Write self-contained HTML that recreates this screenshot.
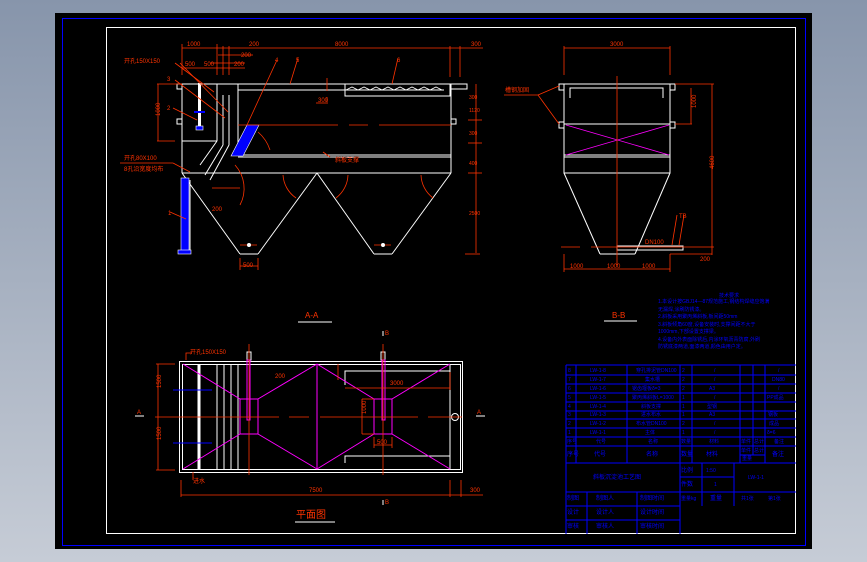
<!DOCTYPE html>
<html><head><meta charset="utf-8"><style>
html,body{margin:0;padding:0;width:867px;height:562px;overflow:hidden;background:linear-gradient(#8795ab,#c6ccd6);}
svg{display:block}
text{font-family:"Liberation Sans","Noto Sans CJK SC",sans-serif;}
</style></head><body>
<svg width="867" height="562" viewBox="0 0 867 562" xmlns="http://www.w3.org/2000/svg">
<rect x="55" y="13" width="757" height="536" fill="#000"/>
<rect x="62.5" y="18.5" width="743" height="527" fill="none" stroke="#0000ff" stroke-width="1"/>
<rect x="106.5" y="27.5" width="689" height="506" fill="none" stroke="#fff" stroke-width="1"/>

<!-- A-A section -->
<g stroke="#fff" stroke-width="1" fill="none">
<line x1="182" y1="84" x2="467" y2="84"/>
<rect x="177" y="84" width="5" height="5"/>
<rect x="177" y="119" width="5" height="5"/>
<rect x="451" y="84" width="16" height="5"/>
<rect x="451" y="119" width="5" height="5"/>
<line x1="182" y1="84" x2="182" y2="173"/>
<line x1="182" y1="141" x2="217" y2="141"/>
<line x1="217" y1="84" x2="217" y2="141"/>
<line x1="238" y1="90" x2="444" y2="90"/>
<line x1="238" y1="84" x2="238" y2="156"/>
<rect x="345" y="84" width="105" height="12"/>
<line x1="451" y1="84" x2="451" y2="173"/>
<line x1="238" y1="155" x2="451" y2="155"/>
<line x1="238" y1="157" x2="451" y2="157"/>
<line x1="182" y1="173" x2="451" y2="173"/>
<line x1="182" y1="173" x2="240" y2="254"/>
<line x1="240" y1="254" x2="258" y2="254"/>
<line x1="258" y1="254" x2="317" y2="173"/>
<line x1="317" y1="173" x2="374" y2="254"/>
<line x1="374" y1="254" x2="392" y2="254"/>
<line x1="392" y1="254" x2="451" y2="173"/>
<line x1="223" y1="95" x2="223" y2="145"/><line x1="229" y1="95" x2="229" y2="145"/>
<line x1="223" y1="145" x2="205" y2="175"/><line x1="229" y1="145" x2="210" y2="180"/>
<line x1="217" y1="141" x2="200" y2="165"/>
<line x1="190" y1="180" x2="190" y2="253"/>
</g>
<polyline points="346,90 352,87 358,90 364,87 370,90 376,87 382,90 388,87 394,90 400,87 406,90 412,87 418,90 424,87 430,90 436,87 442,90" fill="none" stroke="#fff" stroke-width="0.8"/>
<rect x="198" y="83" width="3" height="45" fill="#fff"/>
<rect x="196" y="126" width="7" height="4" fill="#00f" stroke="#fff" stroke-width="0.6"/>
<line x1="194" y1="112" x2="205" y2="112" stroke="#00f" stroke-width="2"/>
<rect x="181" y="178" width="8" height="75" fill="#00f" stroke="#fff" stroke-width="0.6"/>
<rect x="178" y="250" width="13" height="4" fill="#00f" stroke="#fff" stroke-width="0.6"/>
<polygon points="247,125 259,125 243,156 231,156" fill="#0000ff" stroke="#fff" stroke-width="0.6"/>
<g stroke="#ff3300" stroke-width="0.8" fill="none">
<line x1="238" y1="125" x2="338" y2="125"/><line x1="349" y1="125" x2="368" y2="125"/><line x1="379" y1="125" x2="451" y2="125"/>
<line x1="182" y1="48" x2="483" y2="48"/>
<line x1="182" y1="44" x2="182" y2="75"/><line x1="217" y1="44" x2="217" y2="75"/>
<line x1="223" y1="46" x2="223" y2="75"/><line x1="229" y1="46" x2="229" y2="75"/>
<line x1="450" y1="46" x2="450" y2="77"/><line x1="460" y1="46" x2="460" y2="77"/>
<line x1="182" y1="68" x2="245" y2="68"/><line x1="218" y1="55" x2="253" y2="55"/><line x1="210" y1="63" x2="245" y2="63"/>
<line x1="157" y1="84" x2="182" y2="84"/><line x1="157" y1="141" x2="175" y2="141"/>
<line x1="158" y1="84" x2="158" y2="141"/>
<line x1="476" y1="84" x2="476" y2="253"/>
<line x1="468" y1="120" x2="482" y2="120"/><line x1="468" y1="143" x2="482" y2="143"/><line x1="468" y1="173" x2="482" y2="173"/>
<line x1="465" y1="254" x2="480" y2="254"/>
<line x1="240" y1="258" x2="240" y2="270"/><line x1="258" y1="258" x2="258" y2="270"/><line x1="240" y1="266" x2="258" y2="266"/>
<line x1="277" y1="60" x2="247" y2="125"/><line x1="298" y1="58" x2="290" y2="84"/><line x1="398" y1="58" x2="392" y2="84"/>
<line x1="180" y1="63" x2="228" y2="112"/><line x1="175" y1="80" x2="225" y2="118"/><line x1="173" y1="108" x2="197" y2="120"/>
<line x1="175" y1="63" x2="214" y2="92"/>
<line x1="120" y1="163" x2="173" y2="163"/><line x1="173" y1="163" x2="190" y2="172"/>
<line x1="170" y1="212" x2="186" y2="219"/>
<path d="M258,132 A40,40 0 0 1 270,150"/><path d="M283,175 A30,30 0 0 0 296,198"/><path d="M348,175 A30,30 0 0 1 336,198"/><path d="M421,175 A30,30 0 0 0 433,198"/>
<path d="M235,165 A35,35 0 0 1 240,205"/><line x1="212" y1="188" x2="240" y2="188"/>
<line x1="323" y1="152" x2="330" y2="157"/>
<line x1="327" y1="97" x2="327" y2="102"/><line x1="316" y1="103" x2="328" y2="103"/><line x1="327" y1="78" x2="327" y2="91"/>
<line x1="240" y1="245" x2="257" y2="245"/><line x1="374" y1="245" x2="391" y2="245"/>
</g>
<circle cx="249" cy="245" r="2" fill="#fff"/><circle cx="383" cy="245" r="2" fill="#fff"/>
<g fill="#ff3300" font-size="6">
<text x="187" y="46">1000</text><text x="249" y="46">200</text><text x="335" y="46">8000</text><text x="471" y="46">300</text>
<text x="241" y="57">200</text><text x="185" y="66">500</text><text x="204" y="66">500</text><text x="234" y="66">200</text>
<text x="124" y="63">开孔150X150</text><text x="167" y="81">3</text><text x="167" y="110">2</text>
<text x="275" y="62">4</text><text x="296" y="62">5</text><text x="397" y="62">6</text>
<text x="318" y="102">300</text><text x="124" y="160">开孔80X100</text><text x="124" y="171">8孔沿宽度均布</text>
<text x="168" y="215">1</text><text x="335" y="162">斜板支撑</text><text x="212" y="211">200</text><text x="243" y="267">500</text>
<text x="150" y="118" transform="rotate(-90 154 112)">1000</text>
<text x="469" y="99" font-size="5">300</text><text x="469" y="112" font-size="5">1120</text>
<text x="469" y="135" font-size="5">300</text><text x="469" y="165" font-size="5">400</text><text x="469" y="215" font-size="5">2500</text>
<text x="305" y="318" font-size="8">A-A</text>
</g>
<line x1="298" y1="322" x2="332" y2="322" stroke="#fff"/>

<!-- B-B -->
<g stroke="#fff" stroke-width="1" fill="none">
<rect x="564" y="84" width="106" height="89"/>
<rect x="559" y="84" width="5" height="6"/><rect x="670" y="84" width="5" height="6"/>
<rect x="559" y="122" width="5" height="6"/><rect x="670" y="122" width="5" height="6"/>
<polyline points="570,98 570,88 663,88 663,98"/>
<line x1="564" y1="124" x2="670" y2="124"/><line x1="564" y1="155" x2="670" y2="155"/><line x1="564" y1="157" x2="670" y2="157"/>
<line x1="564" y1="173" x2="600" y2="254"/><line x1="670" y1="173" x2="635" y2="254"/><line x1="600" y1="254" x2="635" y2="254"/>
<rect x="617" y="246" width="66" height="4"/>
</g>
<g stroke="#ff00ff" stroke-width="0.8"><line x1="566" y1="125" x2="669" y2="155"/><line x1="566" y1="155" x2="669" y2="125"/></g>
<g stroke="#ff3300" stroke-width="0.8" fill="none">
<line x1="564" y1="48" x2="670" y2="48"/><line x1="564" y1="46" x2="564" y2="75"/><line x1="670" y1="46" x2="670" y2="75"/>
<line x1="617" y1="76" x2="617" y2="265"/>
<line x1="675" y1="84" x2="714" y2="84"/><line x1="675" y1="124" x2="692" y2="124"/><line x1="691" y1="88" x2="691" y2="124"/>
<line x1="712" y1="84" x2="712" y2="255"/>
<line x1="561" y1="247" x2="580" y2="247"/><line x1="591" y1="247" x2="714" y2="247"/>
<line x1="564" y1="254" x2="564" y2="272"/><line x1="670" y1="254" x2="670" y2="272"/><line x1="670" y1="254" x2="712" y2="254"/>
<line x1="564" y1="269" x2="670" y2="269"/>
<line x1="504" y1="95" x2="538" y2="95"/><line x1="538" y1="95" x2="559" y2="86"/><line x1="538" y1="95" x2="559" y2="124"/>
<line x1="677" y1="215" x2="672" y2="245"/><line x1="684" y1="215" x2="679" y2="245"/>
</g>
<g fill="#ff3300" font-size="6">
<text x="610" y="46">3000</text><text x="505" y="92">槽钢加固</text><text x="686" y="110" transform="rotate(-90 690 104)">1000</text>
<text x="705" y="172" transform="rotate(-90 708 166)">4600</text>
<text x="570" y="268">1000</text><text x="607" y="268">1000</text><text x="642" y="268">1000</text>
<text x="645" y="244">DN100</text><text x="679" y="218">TB</text><text x="700" y="261">200</text>
<text x="612" y="318" font-size="8">B-B</text>
</g>
<line x1="604" y1="321" x2="637" y2="321" stroke="#fff"/>
<g fill="#0000ff" font-size="5">
<text x="719" y="297">技术要求</text>
<text x="658" y="303">1.本设计按GBJ14—87规范施工,钢结构焊缝应饱满</text>
<text x="658" y="311">无漏焊,涂刷防锈漆。</text>
<text x="658" y="318">2.斜板采用聚丙烯斜板,板间距50mm</text>
<text x="658" y="326">3.斜板倾角60度,设备安装时,支撑间距不大于</text>
<text x="658" y="333">1000mm,下部设置支撑梁。</text>
<text x="658" y="341">4.设备内外表面除锈后,内涂环氧沥青防腐,外刷</text>
<text x="658" y="348">防锈底漆两道,面漆两道,颜色由用户定。</text>
</g>

<!-- Plan -->
<g stroke="#fff" stroke-width="1" fill="none">
<rect x="179.5" y="361.5" width="283" height="111"/>
<rect x="182.5" y="364.5" width="278" height="105"/>
<line x1="199" y1="364" x2="199" y2="470" stroke-width="3"/>
<line x1="217" y1="364" x2="217" y2="470"/><line x1="224" y1="364" x2="224" y2="470"/><line x1="231" y1="364" x2="231" y2="470"/><line x1="238" y1="364" x2="238" y2="470"/>
<polyline points="345,385 345,371 450,371"/><polyline points="345,463 345,456 450,456"/>
<line x1="450" y1="364" x2="450" y2="470"/>
<circle cx="455" cy="417" r="3.5"/>
<rect x="247" y="352" width="4" height="8"/><rect x="381" y="352" width="4" height="8"/>
</g>
<g stroke="#ff00ff" stroke-width="1" fill="none">
<rect x="240" y="399" width="18" height="35"/><rect x="374" y="399" width="18" height="35"/>
<line x1="317" y1="364" x2="317" y2="469"/>
<line x1="183" y1="364" x2="240" y2="399"/><line x1="183" y1="469" x2="240" y2="434"/>
<line x1="317" y1="364" x2="258" y2="399"/><line x1="317" y1="469" x2="258" y2="434"/>
<line x1="317" y1="364" x2="374" y2="399"/><line x1="317" y1="469" x2="374" y2="434"/>
<line x1="450" y1="364" x2="392" y2="399"/><line x1="450" y1="469" x2="392" y2="434"/>
<rect x="247" y="360" width="3" height="60"/><rect x="382" y="360" width="3" height="60"/>
</g>
<line x1="173" y1="390" x2="212" y2="390" stroke="#0000ff"/><line x1="173" y1="443" x2="212" y2="443" stroke="#0000ff"/>
<g stroke="#ff3300" stroke-width="0.8" fill="none">
<line x1="155" y1="417" x2="279" y2="417"/><line x1="289" y1="417" x2="309" y2="417"/><line x1="320" y1="417" x2="418" y2="417"/><line x1="428" y1="417" x2="462" y2="417"/>
<line x1="249" y1="344" x2="249" y2="475"/><line x1="383" y1="344" x2="383" y2="475"/>
<line x1="158" y1="364" x2="158" y2="470"/><line x1="156" y1="364" x2="175" y2="364"/><line x1="156" y1="470" x2="175" y2="470"/>
<line x1="181" y1="480" x2="181" y2="497"/><line x1="450" y1="480" x2="450" y2="497"/><line x1="461" y1="480" x2="461" y2="497"/>
<line x1="181" y1="495" x2="483" y2="495"/>
<line x1="345" y1="388" x2="450" y2="388"/><line x1="450" y1="372" x2="450" y2="390"/>
<line x1="362" y1="399" x2="374" y2="399"/><line x1="362" y1="434" x2="374" y2="434"/><line x1="362" y1="399" x2="362" y2="434"/>
<line x1="374" y1="437" x2="374" y2="448"/><line x1="392" y1="437" x2="392" y2="448"/><line x1="374" y1="445" x2="392" y2="445"/>
<polyline points="186,360 186,353 192,353"/>
<line x1="193" y1="472" x2="193" y2="480"/>
<line x1="338" y1="380" x2="338" y2="364"/>
</g>
<g fill="#ff3300" font-size="6">
<text x="190" y="354">开孔150X150</text><text x="275" y="378">200</text><text x="390" y="385">3000</text>
<text x="159" y="398" transform="rotate(-90 155 392)">1500</text><text x="159" y="450" transform="rotate(-90 155 444)">1500</text>
<text x="364" y="424" transform="rotate(-90 360 418)">1000</text><text x="377" y="444">500</text>
<text x="193" y="483">进水</text><text x="309" y="492">7500</text><text x="470" y="492">300</text>
<text x="137" y="414">A</text><text x="477" y="414">A</text>
<text x="385" y="335">B</text><text x="385" y="504">B</text>
<text x="296" y="518" font-size="10">平面图</text>
</g>
<line x1="135" y1="416" x2="144" y2="416" stroke="#fff"/><line x1="476" y1="416" x2="485" y2="416" stroke="#fff"/>
<line x1="383" y1="331" x2="383" y2="336" stroke="#fff"/><line x1="383" y1="500" x2="383" y2="505" stroke="#fff"/>
<line x1="295" y1="522" x2="335" y2="522" stroke="#fff"/>

<!-- title block -->
<g stroke="#0000ff" stroke-width="1" fill="none">
<line x1="566" y1="365" x2="796" y2="365"/>
<line x1="566" y1="365" x2="566" y2="534"/>
<line x1="566" y1="375" x2="796" y2="375"/><line x1="566" y1="384" x2="796" y2="384"/><line x1="566" y1="393" x2="796" y2="393"/>
<line x1="566" y1="402" x2="796" y2="402"/><line x1="566" y1="411" x2="796" y2="411"/><line x1="566" y1="419" x2="796" y2="419"/>
<line x1="566" y1="428" x2="796" y2="428"/><line x1="566" y1="437" x2="796" y2="437"/><line x1="566" y1="446" x2="796" y2="446"/>
<line x1="566" y1="463" x2="796" y2="463"/><line x1="680" y1="477" x2="734" y2="477"/>
<line x1="566" y1="492" x2="796" y2="492"/><line x1="566" y1="506" x2="680" y2="506"/><line x1="566" y1="520" x2="680" y2="520"/>
<line x1="576" y1="365" x2="576" y2="463"/><line x1="627" y1="365" x2="627" y2="463"/><line x1="680" y1="365" x2="680" y2="534"/>
<line x1="692" y1="365" x2="692" y2="463"/><line x1="740" y1="365" x2="740" y2="463"/><line x1="753" y1="365" x2="753" y2="455"/><line x1="765" y1="365" x2="765" y2="463"/>
<line x1="740" y1="455" x2="765" y2="455"/>
<line x1="587" y1="492" x2="587" y2="534"/><line x1="637" y1="492" x2="637" y2="534"/>
<line x1="702" y1="463" x2="702" y2="506"/><line x1="734" y1="463" x2="734" y2="506"/>
</g>
<g fill="#0000ff" font-size="5">
<text x="568" y="372">8</text><text x="590" y="372">LW-1-8</text><text x="636" y="372">穿孔排泥管DN100</text><text x="682" y="372">2</text><text x="714" y="372">/</text><text x="778" y="372">/</text>
<text x="568" y="381">7</text><text x="590" y="381">LW-1-7</text><text x="645" y="381">集水槽</text><text x="682" y="381">2</text><text x="714" y="381">/</text><text x="772" y="381">DN80</text>
<text x="568" y="390">6</text><text x="590" y="390">LW-1-6</text><text x="632" y="390">锯齿堰板δ=3</text><text x="682" y="390">2</text><text x="709" y="390">A3</text><text x="778" y="390">/</text>
<text x="568" y="399">5</text><text x="590" y="399">LW-1-5</text><text x="632" y="399">聚丙烯斜板L=1000</text><text x="682" y="399">1</text><text x="714" y="399">/</text><text x="767" y="399">PP成品</text>
<text x="568" y="408">4</text><text x="590" y="408">LW-1-4</text><text x="641" y="408">斜板支撑</text><text x="682" y="408">1</text><text x="707" y="408">型钢</text>
<text x="568" y="416">3</text><text x="590" y="416">LW-1-3</text><text x="641" y="416">进水布水</text><text x="682" y="416">1</text><text x="709" y="416">A3</text><text x="768" y="416">钢板</text>
<text x="568" y="425">2</text><text x="590" y="425">LW-1-2</text><text x="636" y="425">布水管DN100</text><text x="682" y="425">2</text><text x="714" y="425">/</text><text x="769" y="425">成品</text>
<text x="568" y="434">1</text><text x="590" y="434">LW-1-1</text><text x="645" y="434">主体</text><text x="682" y="434">1</text><text x="714" y="434">/</text><text x="767" y="434">δ=6</text>
<text x="567" y="443">序号</text><text x="596" y="443">代号</text><text x="648" y="443">名称</text><text x="681" y="443">数量</text><text x="709" y="443">材料</text><text x="741" y="443">单件</text><text x="754" y="443">总计</text><text x="774" y="443">备注</text>
<text x="567" y="456" font-size="6">序号</text><text x="594" y="456" font-size="6">代号</text><text x="646" y="456" font-size="6">名称</text><text x="681" y="456" font-size="6">数量</text><text x="706" y="456" font-size="6">材料</text><text x="741" y="452">单件</text><text x="754" y="452">总计</text><text x="742" y="460">重量</text><text x="772" y="456" font-size="6">备注</text>
<text x="593" y="479" font-size="6">斜板沉淀池工艺图</text>
<text x="681" y="472" font-size="6">比例</text><text x="706" y="472">1:50</text><text x="748" y="479">LW-1-1</text>
<text x="681" y="486" font-size="6">件数</text><text x="714" y="486">1</text>
<text x="567" y="500" font-size="6">制图</text><text x="596" y="500" font-size="6">制图人</text><text x="640" y="500" font-size="6">制图时间</text>
<text x="681" y="500">重量kg</text><text x="710" y="500" font-size="6">重量</text><text x="741" y="500">共1张</text><text x="768" y="500">第1张</text>
<text x="567" y="514" font-size="6">设计</text><text x="596" y="514" font-size="6">设计人</text><text x="640" y="514" font-size="6">设计时间</text>
<text x="567" y="528" font-size="6">审核</text><text x="596" y="528" font-size="6">审核人</text><text x="640" y="528" font-size="6">审核时间</text>
</g>
</svg>
</body></html>
